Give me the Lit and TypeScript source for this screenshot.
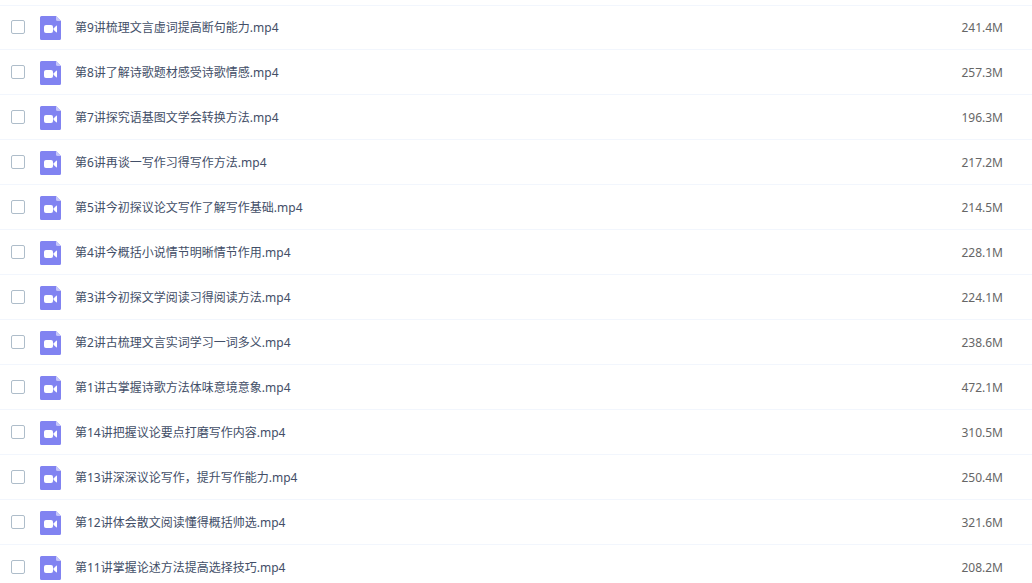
import { LitElement, html, css } from "lit";
import { customElement, property } from "lit/decorators.js";

interface VideoFile {
  name: string;
  size: string;
}

const FILES: VideoFile[] = [
  { name: "第9讲梳理文言虚词提高断句能力.mp4", size: "241.4M" },
  { name: "第8讲了解诗歌题材感受诗歌情感.mp4", size: "257.3M" },
  { name: "第7讲探究语基图文学会转换方法.mp4", size: "196.3M" },
  { name: "第6讲再谈一写作习得写作方法.mp4", size: "217.2M" },
  { name: "第5讲今初探议论文写作了解写作基础.mp4", size: "214.5M" },
  { name: "第4讲今概括小说情节明晰情节作用.mp4", size: "228.1M" },
  { name: "第3讲今初探文学阅读习得阅读方法.mp4", size: "224.1M" },
  { name: "第2讲古梳理文言实词学习一词多义.mp4", size: "238.6M" },
  { name: "第1讲古掌握诗歌方法体味意境意象.mp4", size: "472.1M" },
  { name: "第14讲把握议论要点打磨写作内容.mp4", size: "310.5M" },
  { name: "第13讲深深议论写作，提升写作能力.mp4", size: "250.4M" },
  { name: "第12讲体会散文阅读懂得概括帅选.mp4", size: "321.6M" },
  { name: "第11讲掌握论述方法提高选择技巧.mp4", size: "208.2M" },
];

@customElement("video-icon")
export class VideoIcon extends LitElement {
  static styles = css`
    :host {
      display: block;
      flex: none;
    }
    .icon {
      display: block;
    }
  `;

  render() {
    return html`
      <svg class="icon" width="21" height="24" viewBox="0 0 21 24" aria-hidden="true">
        <path d="M1.500 0H16L21 5V22.500a1.500 1.500 0 0 1-1.500 1.500H1.500a1.500 1.500 0 0 1-1.500-1.500V1.500a1.500 1.500 0 0 1 1.500-1.500z" fill="#8183f1" />
        <path d="M16 0L21 5H17.500a1.500 1.500 0 0 1-1.500-1.500z" fill="#c6c7fa" />
        <rect x="4" y="9" width="9" height="8" rx="2" fill="#fff" />
        <path d="M13.500 12.500L16.200 9.700Q17 9.200 17 10.200V15.800Q17 16.800 16.200 16.300L13.500 13.800z" fill="#fff" />
      </svg>
    `;
  }
}

@customElement("file-list")
export class FileList extends LitElement {
  @property({ attribute: false }) files: VideoFile[] = [];

  static styles = css`
    :host {
      display: block;
    }
    .list {
      margin: 0;
      padding: 5px 0 0;
      list-style: none;
    }
    .row {
      display: flex;
      align-items: center;
      box-sizing: border-box;
      height: 45px;
      padding: 2px 29px 0 11px;
      border-bottom: 1px solid #f2f6fd;
      line-height: 18px;
    }
    .row:first-child {
      height: 45px;
      box-shadow: inset 0 1px #f2f6fd;
    }
    .check {
      appearance: none;
      flex: none;
      box-sizing: border-box;
      width: 14px;
      height: 14px;
      margin: 0 15px 2px 0;
      border: 1px solid #aebdca;
      border-radius: 2px;
      background: #fff;
    }
    .check:checked {
      border-color: #8183f1;
      background: #8183f1;
    }
    .name {
      flex: 1;
      min-width: 0;
      margin-left: 14px;
      overflow: hidden;
      white-space: nowrap;
      text-overflow: ellipsis;
      color: #424e67;
    }
    .size {
      flex: none;
      color: #666;
    }
  `;

  render() {
    return html`
      <ul class="list">
        ${this.files.map(
          (file, i) => html`
            <li class="row">
              <input class="check" type="checkbox" id="file-${i}" />
              <video-icon></video-icon>
              <label class="name" for="file-${i}">${file.name}</label>
              <span class="size">${file.size}</span>
            </li>
          `
        )}
      </ul>
    `;
  }
}

@customElement("app-root")
export class AppRoot extends LitElement {
  static styles = css`
    :host {
      display: block;
      height: 100vh;
      overflow: hidden;
      background: #fff;
      font-family: "Noto Sans", "Noto Sans CJK SC", sans-serif;
      font-size: 12px;
    }
  `;

  render() {
    return html`<file-list .files=${FILES}></file-list>`;
  }
}
